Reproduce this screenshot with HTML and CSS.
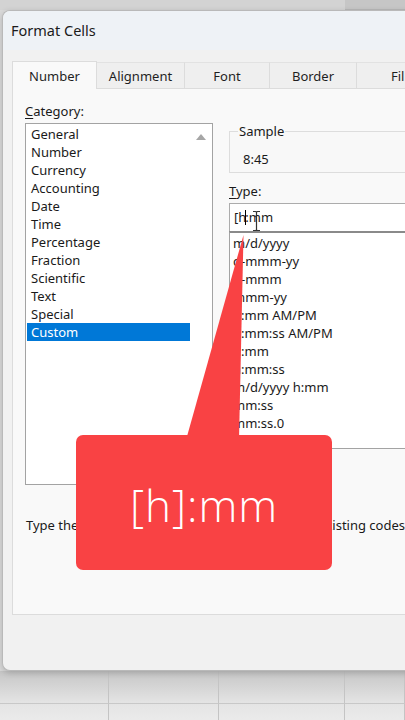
FILE: index.html
```html
<!DOCTYPE html>
<html>
<head>
<meta charset="utf-8">
<link rel="stylesheet" href="styles.css">
</head>
<body>
<div class="topstrip"><div class="topstrip-right"></div></div>
<div class="dialog">
  <div class="titlebar">Format Cells</div>
  <div class="tabs">
    <div class="tab tab-active">Number</div>
    <div class="tab tab-align">Alignment</div>
    <div class="tab tab-font">Font</div>
    <div class="tab tab-border">Border</div>
    <div class="tab tab-fill">Fill</div>
  </div>
  <div class="panel">
    <div class="columns">
      <div class="leftcol">
        <div class="label"><u>C</u>ategory:</div>
        <div class="catlist">
          <div class="catitems">
            <div class="item">General</div>
            <div class="item">Number</div>
            <div class="item">Currency</div>
            <div class="item">Accounting</div>
            <div class="item">Date</div>
            <div class="item">Time</div>
            <div class="item">Percentage</div>
            <div class="item">Fraction</div>
            <div class="item">Scientific</div>
            <div class="item">Text</div>
            <div class="item">Special</div>
            <div class="item item-sel">Custom</div>
          </div>
          <div class="scrollbar">
            <svg class="uparrow" width="10" height="6" viewBox="0 0 10 6"><polygon points="0,6 10,6 5,0" fill="#a6a6a6"/></svg>
          </div>
        </div>
      </div>
      <div class="rightcol">
        <fieldset class="sample">
          <legend class="sample-legend">Sample</legend>
          <div class="sample-value">8:45</div>
        </fieldset>
        <div class="label type-label"><u>T</u>ype:</div>
        <div class="typeinput">[h<span class="caret"></span>:mm</div>
        <div class="typelist">
          <div class="item">m/d/yyyy</div>
          <div class="item">d-mmm-yy</div>
          <div class="item">d-mmm</div>
          <div class="item">mmm-yy</div>
          <div class="item">h:mm AM/PM</div>
          <div class="item">h:mm:ss AM/PM</div>
          <div class="item">h:mm</div>
          <div class="item">h:mm:ss</div>
          <div class="item">m/d/yyyy h:mm</div>
          <div class="item">mm:ss</div>
          <div class="item">mm:ss.0</div>
        </div>
      </div>
    </div>
    <div class="desc">Type the number format code, using one of the existing codes as a starting point.</div>
  </div>
</div>
<div class="sheet">
  <div class="cell c1"></div><div class="cell c2"></div><div class="cell c3"></div><div class="cell c4"></div>
  <div class="cell c1"></div><div class="cell c2"></div><div class="cell c3"></div><div class="cell c4"></div>
</div>

<svg class="ibeam" width="9" height="22" viewBox="0 0 9 22">
  <path d="M1 1.5 H3.5 Q4.5 1.5 4.5 2.5 Q4.5 1.5 5.5 1.5 H8 M4.5 2.5 V19.5 M1 20.5 H3.5 Q4.5 20.5 4.5 19.5 Q4.5 20.5 5.5 20.5 H8" fill="none" stroke="#333" stroke-width="1.2"/>
</svg>

<svg class="pointer" width="405" height="720" viewBox="0 0 405 720">
  <polygon points="243.5,235 239,440 186,440" fill="#f94244"/>
</svg>
<div class="callout">[h]:mm</div>
</body>
</html>
```
FILE: styles.css
```css
html, body {
  margin: 0;
  padding: 0;
  overflow: hidden;
  width: 405px;
  height: 720px;
}
body {
  background: #d9d9d9;
  font-family: "Noto Sans", "Open Sans", sans-serif;
  font-size: 13px;
  color: #1a1a1a;
  position: relative;
}
.topstrip {
  height: 10px;
  background: #d3d3d3;
  display: flex;
  justify-content: flex-end;
}
.topstrip-right {
  width: 60px;
  background: #c6c6c6;
  border-bottom: 1px solid #b8b8b8;
}
.dialog {
  margin-left: 2px;
  width: 460px;
  height: 659px;
  background: #f1f1f1;
  border: 1px solid #b9b9b9;
  border-right: none;
  border-radius: 8px 0 0 8px;
  overflow: hidden;
  box-shadow: 0 2px 6px rgba(0,0,0,0.18);
  position: relative;
  z-index: 1;
}
.titlebar {
  height: 39px;
  background: #eef2f6;
  padding-left: 8px;
  font-size: 14.5px;
  line-height: 39px;
  color: #1b1b1b;
}
.tabs {
  margin-left: 9px;
  margin-top: 10px;
  display: flex;
  align-items: flex-end;
  height: 28px;
}
.tab {
  height: 26px;
  line-height: 26px;
  text-align: center;
  background: #efefef;
  border-top: 1px solid #e2e2e2;
  border-right: 1px solid #dcdcdc;
  box-sizing: border-box;
  color: #1f1f1f;
}
.tab-active {
  width: 85px;
  height: 28px;
  line-height: 28px;
  background: #f9f9f9;
  border: 1px solid #dcdcdc;
  border-bottom: none;
  position: relative;
  top: 1px;
}
.tab-align { width: 88px; }
.tab-font { width: 85px; }
.tab-border { width: 87px; }
.tab-fill { width: 80px; text-align: left; padding-left: 34px; }
.panel {
  margin-left: 9px;
  background: #f9f9f9;
  border: 1px solid #dcdcdc;
  padding: 13px 0 0 12px;
  box-sizing: border-box;
  height: 527px;
}
.columns {
  display: flex;
  gap: 16px;
}
.leftcol {
  width: 188px;
}
.label {
  line-height: 18px;
  height: 18px;
}
.label u {
  text-decoration-thickness: 1px;
  text-underline-offset: 2px;
}
.catlist {
  margin-top: 3px;
  height: 362px;
  box-sizing: border-box;
  border: 1px solid #a3a3a3;
  background: #ffffff;
  display: flex;
  padding: 1px 0 0 1px;
}
.catitems {
  width: 163px;
}
.item {
  height: 18px;
  line-height: 18px;
  padding-left: 4px;
  white-space: nowrap;
}
.item-sel {
  background: #0078d7;
  color: #ffffff;
}
.scrollbar {
  flex: 1;
  display: flex;
  justify-content: center;
  padding-top: 9px;
}
.uparrow {
  display: block;
}
.rightcol {
  width: 220px;
}
.sample {
  margin: 0;
  margin-top: 20px;
  border: 1px solid #dddddd;
  padding: 0 0 4px 8px;
  background: #f8f8f8;
}
.sample-legend {
  padding: 0 1px;
  line-height: 18px;
}
.sample-value {
  margin-left: 5px;
  padding-top: 10px;
  line-height: 18px;
}
.type-label {
  margin-top: 9px;
}
.typeinput {
  margin-top: 3px;
  height: 28px;
  box-sizing: border-box;
  border: 1px solid #acacac;
  border-bottom: none;
  background: #ffffff;
  line-height: 26px;
  padding-left: 4px;
  white-space: nowrap;
}
.caret {
  display: inline-block;
  width: 1px;
  height: 15px;
  background: #000;
  vertical-align: -3px;
  margin: 0 -1px 0 -1px;
}
.typelist {
  height: 218px;
  box-sizing: border-box;
  border: 1px solid #a3a3a3;
  border-top: 2px solid #8a8a8a;
  background: #ffffff;
  padding-top: 1px;
}
.typelist .item {
  padding-left: 3px;
}
.desc {
  margin-top: 31px;
  line-height: 18px;
  white-space: nowrap;
  margin-left: 1px;
}
.sheet {
  display: grid;
  grid-template-columns: 109px 110px 126px 60px;
  grid-template-rows: 33px 20px;
  background: linear-gradient(#c6c6c6, #e4e4e4 60%, #ececec);
}
.cell {
  border-right: 1px solid #c4c4c4;
  border-bottom: 1px solid #c8c8c8;
}
.ibeam {
  position: absolute;
  left: 252px;
  top: 210px;
  z-index: 3;
}
.pointer {
  position: absolute;
  left: 0;
  top: 0;
  z-index: 4;
}
.callout {
  position: absolute;
  left: 76px;
  top: 435px;
  width: 256px;
  height: 135px;
  background: #f94244;
  border-radius: 7px;
  z-index: 5;
  color: #ffffff;
  font-family: "Open Sans", "Noto Sans", sans-serif;
  font-weight: 300;
  font-size: 44px;
  display: flex;
  align-items: center;
  justify-content: center;
  padding-top: 4px;
  box-sizing: border-box;
  letter-spacing: 1px;
}
```
